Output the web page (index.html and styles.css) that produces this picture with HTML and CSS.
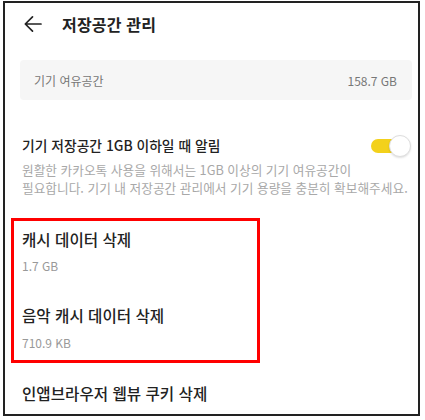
FILE: index.html
```html
<!DOCTYPE html>
<html lang="ko">
<head>
<meta charset="utf-8">
<link rel="stylesheet" href="styles.css">
</head>
<body>
<div class="frame">
  <header class="header">
    <svg class="back" width="20" height="18" viewBox="0 0 20 18">
      <path d="M18 9 H2.5 M9.5 1.8 L2.3 9 L9.5 16.2" fill="none" stroke="#222" stroke-width="1.7" stroke-linecap="round" stroke-linejoin="round"/>
    </svg>
    <h1 class="title">저장공간 관리</h1>
  </header>
  <div class="content">
    <div class="card">
      <span>기기 여유공간</span>
      <span>158.7 GB</span>
    </div>
    <div class="alert">
      <div class="alert-row">
        <div class="item-title alert-title">기기 저장공간 1GB 이하일 때 알림</div>
        <div class="toggle"><span class="knob"></span></div>
      </div>
      <p class="desc">원활한 카카오톡 사용을 위해서는 1GB 이상의 기기 여유공간이<br>필요합니다. 기기 내 저장공간 관리에서 기기 용량을 충분히 확보해주세요.</p>
    </div>
    <div class="highlight">
      <div class="item">
        <div class="item-title">캐시 데이터 삭제</div>
        <div class="size">1.7 GB</div>
      </div>
      <div class="item second">
        <div class="item-title">음악 캐시 데이터 삭제</div>
        <div class="size">710.9 KB</div>
      </div>
    </div>
    <div class="item last">
      <div class="item-title">인앱브라우저 웹뷰 쿠키 삭제</div>
    </div>
  </div>
</div>
</body>
</html>
```
FILE: styles.css
```css
* { box-sizing: border-box; }
html, body { margin: 0; padding: 0; background: #fff; }
body {
  font-family: "Noto Sans CJK KR", "Noto Sans", sans-serif;
  color: #222;
}
.frame {
  margin: 1px 5px 0 3px;
  width: 417px;
  height: 415px;
  border: 2px solid #222;
  background: #fff;
  overflow: hidden;
}
.header {
  height: 41px;
  display: flex;
  align-items: center;
  padding-left: 18px;
}
.back { display: block; margin-top: 1px; }
.title {
  margin: 0 0 0 19px;
  font-size: 16px;
  font-weight: 700;
  letter-spacing: 0.2px;
  line-height: 22px;
}
.content {
  padding: 0 6px 0 17px;
}
.card {
  margin: 16px 0 0 -2px;
  height: 40px;
  background: #f6f6f6;
  border-radius: 4px;
  display: flex;
  justify-content: space-between;
  align-items: center;
  padding: 0 15px 0 14px;
  font-size: 12px;
  color: #777;
}
.alert { margin-top: 34px; }
.alert-row {
  display: flex;
  justify-content: space-between;
  align-items: center;
  height: 22px;
}
.item-title {
  font-size: 15.6px;
  font-weight: 500;
  line-height: 22px;
  color: #222;
}
.item-title.alert-title {
  font-size: 13.8px;
}
.toggle {
  position: relative;
  width: 40px;
  height: 14px;
  margin-top: 2px;
  margin-right: 1px;
}
.toggle::before {
  content: "";
  position: absolute;
  left: 0; top: 0;
  width: 30px; height: 14px;
  border-radius: 7px;
  background: #f3d11b;
}
.knob {
  position: absolute;
  right: 0; top: -4px;
  width: 22px; height: 22px;
  border-radius: 50%;
  background: #fff;
  border: 1px solid #dedede;
  box-shadow: 0 1px 2px rgba(0,0,0,0.12);
}
.desc {
  margin: 5px 0 0;
  font-size: 12.7px;
  line-height: 17.5px;
  color: #a8a8a8;
  white-space: nowrap;
}
.highlight {
  margin: 22px 0 0 -11px;
  width: 249px;
  border: 3px solid #f00;
  padding: 6.5px 0 9.5px 8px;
}
.size {
  margin-top: 8.5px;
  font-size: 12px;
  line-height: 16px;
  color: #999;
}
.item.second { margin-top: 29.5px; }
.item.second .size { margin-top: 9px; }
.item.last { margin-top: 19px; }
```
